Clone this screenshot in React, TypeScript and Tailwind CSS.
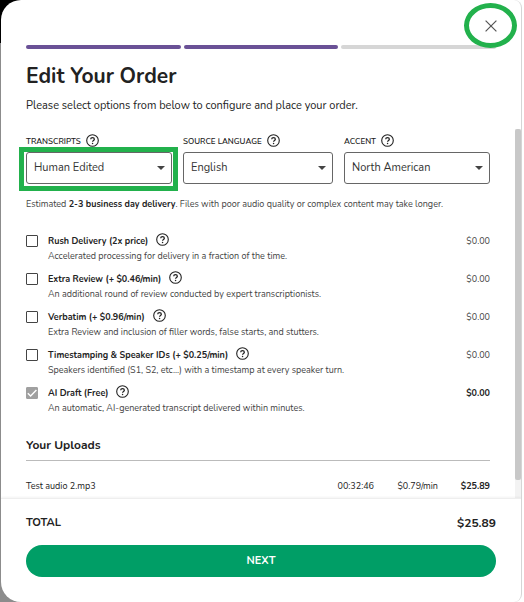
const fields = [
  { id: "transcripts", label: "Transcripts", value: "Human Edited", marked: true },
  { id: "language", label: "Source Language", value: "English", marked: false },
  { id: "accent", label: "Accent", value: "North American", marked: false },
];

const options = [
  {
    id: "rush",
    title: "Rush Delivery (2x price)",
    description: "Accelerated processing for delivery in a fraction of the time.",
    included: false,
  },
  {
    id: "review",
    title: "Extra Review (+ $0.46/min)",
    description: "An additional round of review conducted by expert transcriptionists.",
    included: false,
  },
  {
    id: "verbatim",
    title: "Verbatim (+ $0.96/min)",
    description: "Extra Review and inclusion of filler words, false starts, and stutters.",
    included: false,
  },
  {
    id: "timestamps",
    title: "Timestamping & Speaker IDs (+ $0.25/min)",
    description: "Speakers identified (S1, S2, etc...) with a timestamp at every speaker turn.",
    included: false,
  },
  {
    id: "draft",
    title: "AI Draft (Free)",
    description: "An automatic, AI-generated transcript delivered within minutes.",
    included: true,
  },
];

function HelpButton({ label }: { label: string }) {
  return (
    <button type="button" aria-label={`Help: ${label}`} className="shrink-0 text-[#222]">
      <svg viewBox="0 0 26 26" className="block size-[13px]" fill="none" stroke="currentColor">
        <circle cx="13" cy="13" r="11.6" strokeWidth="2.2" />
        <path d="M9.4 10.6C9.4 8.4 11 7 13 7s3.7 1.3 3.7 3.3c0 2.4-3.6 2.7-3.6 5.2" strokeWidth="2.5" />
        <circle cx="13.1" cy="18.8" r="1.5" fill="currentColor" stroke="none" />
      </svg>
    </button>
  );
}

export default function App() {
  return (
    <div className="min-h-screen bg-[linear-gradient(90deg,#8c8c8c_50%,#fff_50%)] font-['Nunito','Lato',sans-serif] text-[#222]">
      {/* PAGE BEHIND THE DIALOG */}
      <div className="flex min-h-screen bg-[linear-gradient(#000,#000)] bg-[length:50%_43px] bg-no-repeat pr-[2px] pl-px">
        <main className="flex flex-1 flex-col overflow-hidden rounded-l-[20px] rounded-r-lg border-r border-[#d5d5d5] bg-white">
          {/* HEADER */}
          <header className="relative pt-[45px] pr-[25px] pl-[25px]">
            <div className="flex gap-[3px]">
              <div className="h-1 flex-1 rounded-full bg-[#6a5196]" />
              <div className="h-1 flex-1 rounded-full bg-[#6a5196]" />
              <div className="h-1 flex-1 rounded-full bg-[#d6d6d6]" />
            </div>

            <button
              type="button"
              aria-label="Close"
              className="absolute top-[3px] right-[4px] flex h-[45px] w-[53px] items-center justify-center rounded-[50%] border-[5px] border-[#22b14c] text-[#555]"
            >
              <svg viewBox="0 0 12 12" className="size-3" stroke="currentColor" strokeWidth="1.2">
                <path d="M0.6 0.6l10.8 10.8M11.4 0.6L0.6 11.4" />
              </svg>
            </button>

            <h1 className="mt-3 text-[21px] leading-[30px] font-bold">Edit Your Order</h1>
            <p className="mt-[5px] pb-[13px] text-[11px] leading-5 text-[#222]">
              Please select options from below to configure and place your order.
            </p>
          </header>

          <div className="flex flex-1">
            <div className="min-w-0 flex-1 pt-[5px] pr-[25px] pl-[25px]">
              {/* SELECTS */}
              <div className="grid grid-cols-[146fr_150fr_146fr] gap-[11px]">
                {fields.map((field) => (
                  <div key={field.id} className="min-w-0">
                    <div className="mb-0.5 flex h-4 items-start gap-[5px]">
                      <label htmlFor={field.id} className="text-[8px] leading-4 font-semibold whitespace-nowrap uppercase">
                        {field.label}
                      </label>
                      <HelpButton label={field.label} />
                    </div>
                    <div className="relative">
                      <select
                        id={field.id}
                        className="block h-8 w-full appearance-none rounded-[3px] border border-[#666] bg-white px-[7px] text-[11px] text-[#333]"
                      >
                        <option>{field.value}</option>
                      </select>
                      <svg viewBox="0 0 8 4" className="pointer-events-none absolute top-[14px] right-[7px] h-1 w-2 fill-[#444]">
                        <path d="M0 0h8L4 4z" />
                      </svg>
                      {field.marked && (
                        <div className="pointer-events-none absolute -top-[5px] -right-[6px] -bottom-[7px] -left-[7px] border-[5px] border-[#22b14c]" />
                      )}
                    </div>
                  </div>
                ))}
              </div>

              <p className="mt-3 text-[9px] leading-4 text-[#444]">
                Estimated <strong className="text-[#222]">2-3 business day delivery</strong>. Files with poor audio
                quality or complex content may take longer.
              </p>

              {/* OPTIONS */}
              <ul className="mt-[21px] flex flex-col gap-[7px]">
                {options.map((option) => (
                  <li key={option.id} className="flex items-start">
                    <input
                      id={option.id}
                      type="checkbox"
                      defaultChecked={option.included}
                      disabled={option.included}
                      className="peer mt-0.5 size-3 shrink-0 appearance-none rounded-[1px] border border-[#444] bg-white disabled:border-[#a0a0a0] disabled:bg-[#a0a0a0]"
                    />
                    <svg
                      viewBox="0 0 12 12"
                      className="pointer-events-none invisible mt-0.5 -ml-3 size-3 shrink-0 peer-checked:visible"
                      fill="none"
                      stroke="white"
                      strokeWidth="1.4"
                    >
                      <path d="M1.8 6.2l2.8 2.8L10.4 3" />
                    </svg>
                    <div className="ml-[10px] min-w-0 flex-1">
                      <div className="flex h-4 items-start gap-2">
                        <label htmlFor={option.id} className="text-[9px] leading-4 font-bold">
                          {option.title}
                        </label>
                        <HelpButton label={option.title} />
                      </div>
                      <p className="text-[9px] leading-[15px] text-[#444]">{option.description}</p>
                    </div>
                    <span className={option.included ? "text-[9px] leading-4 font-bold" : "text-[9px] leading-4 text-[#444]"}>
                      $0.00
                    </span>
                  </li>
                ))}
              </ul>

              {/* UPLOADS */}
              <h2 className="mt-[19px] border-b border-[#bbb] pb-[5px] text-[12px] leading-5 font-bold">Your Uploads</h2>
              <table className="mt-[15px] w-full text-[9px] leading-5">
                <tbody>
                  <tr>
                    <td>Test audio 2.mp3</td>
                    <td className="w-[60px] text-right">00:32:46</td>
                    <td className="w-[64px] text-right">$0.79/min</td>
                    <td className="w-[52px] text-right font-bold">$25.89</td>
                  </tr>
                </tbody>
              </table>
            </div>

            {/* SCROLLBAR */}
            <div className="flex w-1.5 flex-col bg-[#f3f3f3] pb-[18px]">
              <div className="flex-1 rounded-xs bg-[#c8c8c8]" />
            </div>
          </div>

          {/* FOOTER */}
          <footer className="border-t border-[#eee] px-[25px] pt-3 pb-[25px] shadow-[0_-1px_2px_rgba(0,0,0,0.05)]">
            <div className="flex items-center justify-between leading-6 font-bold">
              <span className="text-[11px]">TOTAL</span>
              <span className="text-[12px]">$25.89</span>
            </div>
            <button type="button" className="mt-2.5 block h-8 w-full rounded-full bg-[#009e66] text-[11px] font-bold text-white">
              NEXT
            </button>
          </footer>
        </main>
      </div>
    </div>
  );
}
